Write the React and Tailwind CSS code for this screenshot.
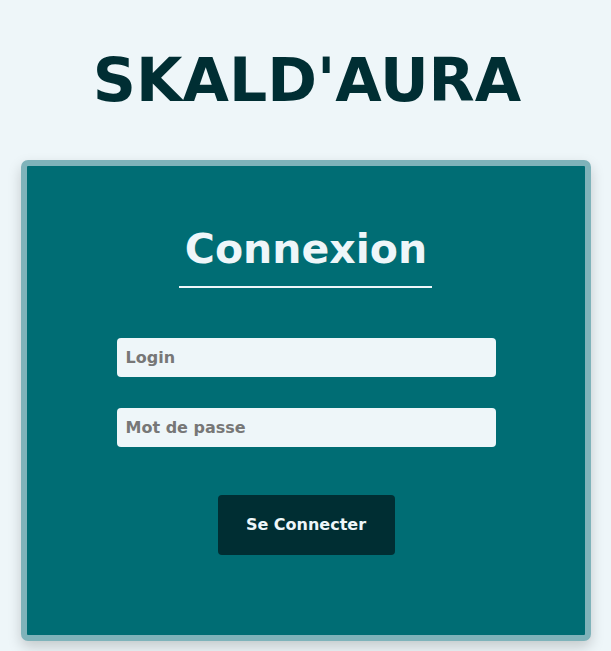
import React from 'react';

const font = { fontFamily: '"DejaVu Sans", sans-serif' };

const App = () => {
    return (
        <div className="min-h-screen bg-[#eef6f9] pt-[40px] pb-[10px] pr-[20px] pl-[21px]" style={font}>
            <h1 className="text-center text-[#002e33] font-bold text-[60px] leading-[80px] pl-[2px]">
                SKALD'AURA
            </h1>

            <div className="mt-[40px] h-[481px] border-[6px] border-[#7fb3ba] rounded-[7px] bg-[#006d74] shadow-[0_6px_14px_rgba(0,0,0,0.18)] flex flex-col items-center">
                <div className="mt-[53px] flex flex-col items-center">
                    <h2 className="text-[#eef6f9] font-bold text-[41px] leading-[60px] px-[6px]">Connexion</h2>
                    <div className="mt-[7px] w-[253px] h-[2px] bg-[#eef6f9]" />
                </div>

                <form className="mt-[50px] flex flex-col items-center" onSubmit={(e) => e.preventDefault()}>
                    <input
                        type="text"
                        placeholder="Login"
                        className="w-[379px] h-[39px] rounded-[4px] bg-[#eef6f9] px-[9px] text-[16px] font-bold text-[#333] placeholder:text-[#777] outline-none"
                    />
                    <input
                        type="password"
                        placeholder="Mot de passe"
                        className="mt-[31px] w-[379px] h-[39px] rounded-[4px] bg-[#eef6f9] px-[9px] text-[16px] font-bold text-[#333] placeholder:text-[#777] outline-none"
                    />
                    <button
                        type="submit"
                        className="mt-[48px] w-[177px] h-[60px] rounded-[4px] bg-[#002e33] text-[#eef6f9] text-[16px] font-bold"
                    >
                        Se Connecter
                    </button>
                </form>
            </div>
        </div>
    );
};

export default App;
